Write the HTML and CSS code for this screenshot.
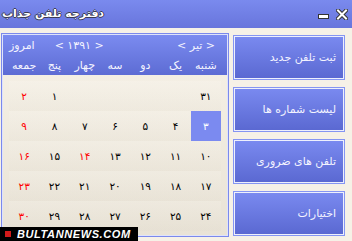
FILE: index.html
```html
<!DOCTYPE html>
<html lang="fa">
<head>
<meta charset="utf-8">
<link rel="stylesheet" href="styles.css">
</head>
<body>
<div class="titlebar">
  <div class="title"><span>دفترجه تلفن جذاب</span></div>
  <div class="controls">
    <svg class="ctl-min" width="11" height="5" viewBox="0 0 11 5"><rect x="0.5" y="0.5" width="10" height="4" fill="#fff" stroke="#333"/></svg>
    <svg class="ctl-close" width="12" height="11" viewBox="0 0 12 11"><path d="M2 1.5 L10 9.5 M10 1.5 L2 9.5" stroke="#333" stroke-width="4" stroke-linecap="square"/><path d="M2 1.5 L10 9.5 M10 1.5 L2 9.5" stroke="#fff" stroke-width="2" stroke-linecap="square"/></svg>
  </div>
</div>
<div class="main">
  <div class="calendar">
    <div class="cal-head">
      <div class="nav-row" dir="rtl">
        <span class="month" dir="ltr">&lt; تیر &gt;</span>
        <span class="year" dir="ltr">&lt; ۱۳۹۱ &gt;</span>
        <span class="today">امروز</span>
      </div>
      <div class="grid days" dir="rtl">
        <span>شنبه</span><span>یک</span><span>دو</span><span>سه</span><span>چهار</span><span>پنج</span><span>جمعه</span>
      </div>
    </div>
    <div class="cal-body">
      <div class="grid row" dir="rtl"><span>۳۱</span><span></span><span></span><span></span><span></span><span>۱</span><span class="red">۲</span></div>
      <div class="grid row" dir="rtl"><span class="sel">۳</span><span>۴</span><span>۵</span><span>۶</span><span>۷</span><span>۸</span><span class="red">۹</span></div>
      <div class="grid row" dir="rtl"><span>۱۰</span><span>۱۱</span><span>۱۲</span><span>۱۳</span><span class="red">۱۴</span><span>۱۵</span><span class="red">۱۶</span></div>
      <div class="grid row" dir="rtl"><span>۱۷</span><span>۱۸</span><span>۱۹</span><span>۲۰</span><span>۲۱</span><span>۲۲</span><span class="red">۲۳</span></div>
      <div class="grid row" dir="rtl"><span>۲۴</span><span>۲۵</span><span>۲۶</span><span>۲۷</span><span>۲۸</span><span>۲۹</span><span class="red">۳۰</span></div>
    </div>
  </div>
  <div class="buttons">
    <div class="btn">ثبت تلفن جدید</div>
    <div class="btn">لیست شماره ها</div>
    <div class="btn">تلفن های ضروری</div>
    <div class="btn">اختیارات</div>
  </div>
</div>
<div class="watermark"><span class="wm-square"></span><span class="wm-text">BULTANNEWS.COM</span></div>
</body>
</html>
```
FILE: styles.css
```css
html, body {
  margin: 0;
  padding: 0;
}
body {
  width: 352px;
  height: 241px;
  overflow: hidden;
  background: #f6f1e7;
  font-family: "DejaVu Sans", sans-serif;
  font-size: 11px;
  position: relative;
}
.titlebar {
  height: 28px;
  display: flex;
  align-items: center;
  background: linear-gradient(#7a8aee, #6875dc);
}
.title {
  padding: 0 0 2px 2px;
  direction: rtl;
  white-space: nowrap;
  color: #fff;
  font-weight: bold;
  font-size: 11px;
  text-shadow: 1px 0 0 #3a3a50, -1px 0 0 #3a3a50, 0 1px 0 #3a3a50, 0 -1px 0 #3a3a50;
}
.controls {
  margin-left: auto;
  margin-right: 4px;
  display: flex;
  align-items: flex-end;
  gap: 7px;
  padding-top: 1px;
}
.ctl-min {
  display: block;
  margin-bottom: 1px;
}
.ctl-close {
  display: block;
}
.main {
  display: flex;
  gap: 4px;
  padding: 5px 0 0 1px;
}
.calendar {
  width: 228px;
  height: 204px;
  box-sizing: border-box;
  border: 1px solid #7b89ec;
  box-shadow: inset 0 0 0 1px #dfe3fb;
  padding: 1px;
  display: flex;
  flex-direction: column;
}
.cal-head {
  height: 40px;
  background: linear-gradient(#7b8bf0, #5d6cd4);
  color: #f4f4ff;
  padding: 0 5px 0 6px;
}
.nav-row {
  height: 20px;
  display: flex;
  align-items: center;
  padding-right: 7px;
}
.year {
  margin-right: auto;
}
.today {
  margin-right: 20px;
}
.grid {
  display: grid;
  grid-template-columns: repeat(7, 1fr);
  width: 212px;
}
.days {
  height: 20px;
  align-items: center;
  text-align: center;
}
.cal-body {
  flex: 1;
  padding: 6px 5px 4px 6px;
  background: linear-gradient(#f4efe4, #e9e3d6);
}
.row {
  height: 30px;
  background: linear-gradient(rgba(255,255,255,0.15), rgba(0,0,0,0.01));
}
.row span {
  display: flex;
  align-items: center;
  justify-content: center;
  color: #000;
  font-size: 10.5px;
}
.row span.red {
  color: #f00;
}
.row span.sel {
  background: #7b8af0;
  color: #fff;
}
.buttons {
  width: 112px;
  display: flex;
  flex-direction: column;
  gap: 7px;
  padding-top: 2px;
}
.btn {
  height: 45px;
  box-sizing: border-box;
  border: 1px solid #8595f2;
  box-shadow: inset 0 0 0 1px #eef0fd;
  background: linear-gradient(#7a8af0, #5a68d1);
  color: #f4f4ff;
  direction: rtl;
  display: flex;
  align-items: center;
  padding-right: 8px;
  font-size: 11px;
}
.watermark {
  position: absolute;
  left: 0;
  top: 227px;
  width: 138px;
  height: 14px;
  background: #000;
  display: flex;
  align-items: center;
}
.wm-square {
  width: 6px;
  height: 6px;
  background: #d21a1a;
  margin-left: 5px;
}
.wm-text {
  margin-left: 6px;
  color: #fff;
  font-family: "Liberation Sans", sans-serif;
  font-weight: bold;
  font-style: italic;
  font-size: 11px;
  letter-spacing: 0.6px;
}
```
